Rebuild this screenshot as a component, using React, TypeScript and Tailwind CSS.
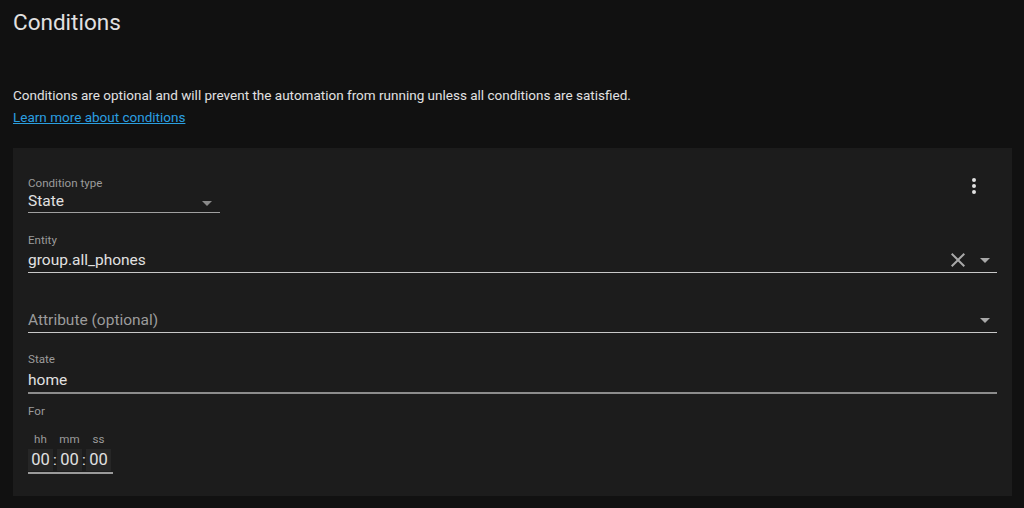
import React from "react";

const Caret = ({ className = "" }: { className?: string }) => (
  <svg viewBox="0 0 24 24" className={className} width="24" height="24">
    <path d="M7 10l5 5 5-5z" fill="currentColor" />
  </svg>
);

const Close = () => (
  <svg viewBox="0 0 24 24" width="24" height="24" className="text-[#a8a8a8]">
    <path
      d="M19 6.41L17.59 5 12 10.59 6.41 5 5 6.41 10.59 12 5 17.59 6.41 19 12 13.41 17.59 19 19 17.59 13.41 12z"
      fill="currentColor"
    />
  </svg>
);

const Dots = () => (
  <svg viewBox="0 0 24 24" width="24" height="24" className="text-[#e1e1e1]">
    <path
      d="M12 16a2 2 0 0 1 2 2 2 2 0 0 1-2 2 2 2 0 0 1-2-2 2 2 0 0 1 2-2m0-6a2 2 0 0 1 2 2 2 2 0 0 1-2 2 2 2 0 0 1-2-2 2 2 0 0 1 2-2m0-6a2 2 0 0 1 2 2 2 2 0 0 1-2 2 2 2 0 0 1-2-2 2 2 0 0 1 2-2z"
      fill="currentColor"
    />
  </svg>
);

function TimeBox({ label, value }: { label: string; value: string }) {
  return (
    <div className="flex flex-col items-center">
      <div className="h-[16px] text-[11.6px] leading-[16px] text-[#9b9b9b]">{label}</div>
      <div className="mt-[2px] h-[22px] w-[25px] bg-[#262626] text-center text-[16.5px] leading-[22px] text-[#e1e1e1]">
        {value}
      </div>
    </div>
  );
}

export default function App() {
  return (
    <div
      className="min-h-[508px] w-[1024px] bg-[#111111] pl-[13px] pr-[12px]"
      style={{ fontFamily: "Roboto, 'Noto Sans', sans-serif" }}
    >
      <div className="pt-[8px] text-[22.5px] leading-[28px] text-[#e1e1e1]">Conditions</div>
      <div className="mt-[49px] text-[13.5px] leading-[20px] text-[#e1e1e1]">
        Conditions are optional and will prevent the automation from running unless all conditions are satisfied.
      </div>
      <div className="mt-[2px] text-[13.5px] leading-[20px]">
        <a className="text-[#2b9fe0] underline" href="#">
          Learn more about conditions
        </a>
      </div>

      <div className="mt-[21px] bg-[#1c1c1c] px-[15px] pt-[14px] pb-[22px]">
        {/* top row */}
        <div className="flex h-[50px] items-start justify-between">
          <div className="w-[192px] pt-[13px]">
            <div className="h-[16px] text-[11.6px] leading-[16px] text-[#9b9b9b]">Condition type</div>
            <div className="flex h-[22px] items-center justify-between border-b border-[#a0a0a0] pb-[1px]">
              <span className="text-[15.5px] leading-[20px] text-[#e1e1e1]">State</span>
              <Caret className="mr-[1px] mt-[4px] text-[#8a8a8a]" />
            </div>
          </div>
          <button className="mr-[-1px] flex h-[48px] w-[48px] items-center justify-center">
            <Dots />
          </button>
        </div>

        {/* Entity */}
        <div className="mt-[4px] h-[57px] border-b border-[#c8c8c8] pt-[16px]">
          <div className="h-[16px] text-[11.6px] leading-[16px] text-[#9b9b9b]">Entity</div>
          <div className="flex h-[24px] items-center justify-between">
            <span className="text-[15.5px] leading-[24px] text-[#e1e1e1]">group.all_phones</span>
            <div className="flex items-center gap-[3px]">
              <Close />
              <Caret className="text-[#a8a8a8]" />
            </div>
          </div>
        </div>

        {/* Attribute */}
        <div className="mt-[3px] h-[57px] border-b border-[#c8c8c8] pt-[32px]">
          <div className="flex h-[24px] items-center justify-between">
            <span className="text-[15.5px] leading-[24px] text-[#9b9b9b]">Attribute (optional)</span>
            <Caret className="text-[#a8a8a8]" />
          </div>
        </div>

        {/* State */}
        <div className="mt-[3px] h-[58px] border-b-2 border-[#8c8c8c] pt-[15px]">
          <div className="h-[17px] text-[11.6px] leading-[16px] text-[#9b9b9b]">State</div>
          <div className="h-[24px] text-[15.5px] leading-[24px] text-[#e1e1e1]">home</div>
        </div>

        {/* For */}
        <div className="mt-[9px] h-[16px] text-[11.6px] leading-[16px] text-[#9b9b9b]">For</div>
        <div className="mt-[12px] inline-flex flex-col">
          <div className="flex items-end">
            <TimeBox label="hh" value="00" />
            <span className="h-[22px] w-[4px] text-center text-[15.5px] leading-[22px] text-[#e1e1e1]">:</span>
            <TimeBox label="mm" value="00" />
            <span className="h-[22px] w-[4px] text-center text-[15.5px] leading-[22px] text-[#e1e1e1]">:</span>
            <TimeBox label="ss" value="00" />
          </div>
          <div className="mt-[1px] h-[2px] w-[85px] bg-[#9a9a9a]" />
        </div>
      </div>
    </div>
  );
}
